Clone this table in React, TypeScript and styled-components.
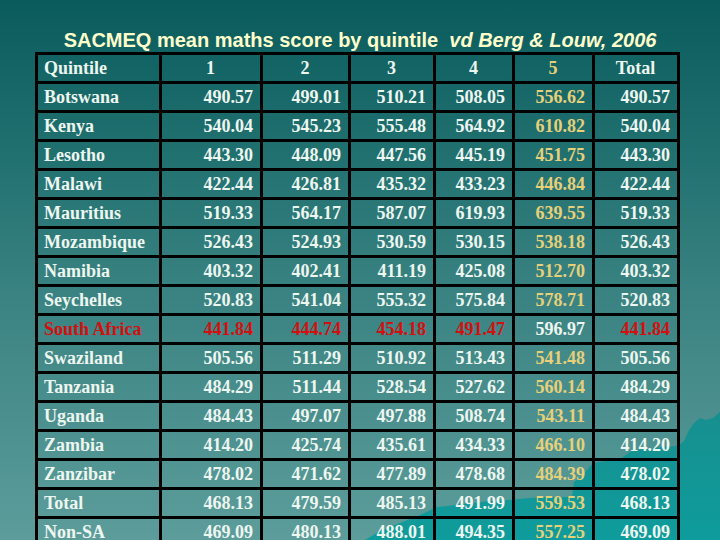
import styled, { createGlobalStyle } from 'styled-components';

const GlobalStyle = createGlobalStyle`
	html, body {
		margin: 0;
		padding: 0;
	}
	body {
		width: 720px;
		height: 540px;
		overflow: hidden;
	}
`;

const Slide = styled.div`
	position: relative;
	width: 720px;
	height: 540px;
	overflow: hidden;
	background: linear-gradient(180deg, #0a5b5c 0%, #1e6e6e 25%, #3a8382 55%, #5c9d9b 100%);
	display: flex;
	flex-direction: column;
	align-items: stretch;
`;

const Mountain = styled.svg`
	position: absolute;
	left: 0;
	top: 0;
	width: 720px;
	height: 540px;
`;

const Title = styled.h1`
	position: relative;
	margin: 28px 0 0;
	height: 26px;
	text-align: center;
	font-family: 'Liberation Sans', Arial, sans-serif;
	font-weight: bold;
	font-size: 20px;
	line-height: 24px;
	color: #ffffcc;
	white-space: pre;
`;

const Cite = styled.span`
	font-style: italic;
`;

const Table = styled.table`
	position: relative;
	margin-left: 35px;
	width: 642px;
	table-layout: fixed;
	border-collapse: collapse;
	font-family: 'Liberation Serif', 'Times New Roman', serif;
	font-weight: bold;
	font-size: 18px;
	color: #eef6f0;
`;

const Cell = styled.td<{ $tone?: 'red' | 'gold'; $align?: 'left' | 'center' | 'right' }>`
	height: 26px;
	padding: 0 7px 0 6px;
	border: 3px solid #000;
	text-align: ${(p) => p.$align ?? 'right'};
	line-height: 20px;
	white-space: nowrap;
	color: ${(p) => (p.$tone === 'red' ? '#d40f0f' : p.$tone === 'gold' ? '#e6d07a' : '#eef6f0')};
`;

const widths = [124, 101, 88, 85, 79, 80, 85];

type Row = [string, string, string, string, string, string, string];

const rows: Row[] = [
  ['Botswana', '490.57', '499.01', '510.21', '508.05', '556.62', '490.57'],
  ['Kenya', '540.04', '545.23', '555.48', '564.92', '610.82', '540.04'],
  ['Lesotho', '443.30', '448.09', '447.56', '445.19', '451.75', '443.30'],
  ['Malawi', '422.44', '426.81', '435.32', '433.23', '446.84', '422.44'],
  ['Mauritius', '519.33', '564.17', '587.07', '619.93', '639.55', '519.33'],
  ['Mozambique', '526.43', '524.93', '530.59', '530.15', '538.18', '526.43'],
  ['Namibia', '403.32', '402.41', '411.19', '425.08', '512.70', '403.32'],
  ['Seychelles', '520.83', '541.04', '555.32', '575.84', '578.71', '520.83'],
  ['South Africa', '441.84', '444.74', '454.18', '491.47', '596.97', '441.84'],
  ['Swaziland', '505.56', '511.29', '510.92', '513.43', '541.48', '505.56'],
  ['Tanzania', '484.29', '511.44', '528.54', '527.62', '560.14', '484.29'],
  ['Uganda', '484.43', '497.07', '497.88', '508.74', '543.11', '484.43'],
  ['Zambia', '414.20', '425.74', '435.61', '434.33', '466.10', '414.20'],
  ['Zanzibar', '478.02', '471.62', '477.89', '478.68', '484.39', '478.02'],
  ['Total', '468.13', '479.59', '485.13', '491.99', '559.53', '468.13'],
  ['Non-SA', '469.09', '480.13', '488.01', '494.35', '557.25', '469.09'],
];

// column 4 of the scores is quintile 5, printed in gold (white on the South Africa row)
const toneFor = (country: string, col: number) => {
  if (country === 'South Africa') return col === 4 ? undefined : 'red';
  return col === 4 ? 'gold' : undefined;
};

const ridge =
  '365,540 380,531 400,523 420,515 437,507 455,505 472,503 490,501 507,500 530,498 548,497 572,497 574,482 580,478 593,463 606,461 620,459 633,450 648,449 662,447 678,446 684,441 688,432 693,424 700,418 706,420 713,418 720,412 720,540';

export default function App() {
  return (
    <>
      <GlobalStyle />
      <Slide>
        <Mountain viewBox="0 0 720 540">
          <defs>
            <linearGradient id="mt" x1="0" y1="0" x2="0" y2="1">
              <stop offset="0" stopColor="#178f8f" />
              <stop offset="1" stopColor="#0f9c9c" />
            </linearGradient>
          </defs>
          <polygon points={ridge} fill="url(#mt)" />
        </Mountain>
        <Title>
          SACMEQ mean maths score by quintile  <Cite>vd Berg &amp; Louw, 2006</Cite>
        </Title>
        <Table>
          <colgroup>
            {widths.map((w, i) => (
              <col key={i} style={{ width: w }} />
            ))}
          </colgroup>
          <thead>
            <tr>
              <Cell as="th" $align="left">Quintile</Cell>
              {['1', '2', '3', '4', '5', 'Total'].map((h, i) => (
                <Cell as="th" key={h} $align="center" $tone={i === 4 ? 'gold' : undefined}>
                  {h}
                </Cell>
              ))}
            </tr>
          </thead>
          <tbody>
            {rows.map(([country, ...scores]) => (
              <tr key={country}>
                <Cell $align="left" $tone={country === 'South Africa' ? 'red' : undefined}>
                  {country}
                </Cell>
                {scores.map((s, i) => (
                  <Cell key={i} $tone={toneFor(country, i)}>
                    {s}
                  </Cell>
                ))}
              </tr>
            ))}
          </tbody>
        </Table>
      </Slide>
    </>
  );
}
